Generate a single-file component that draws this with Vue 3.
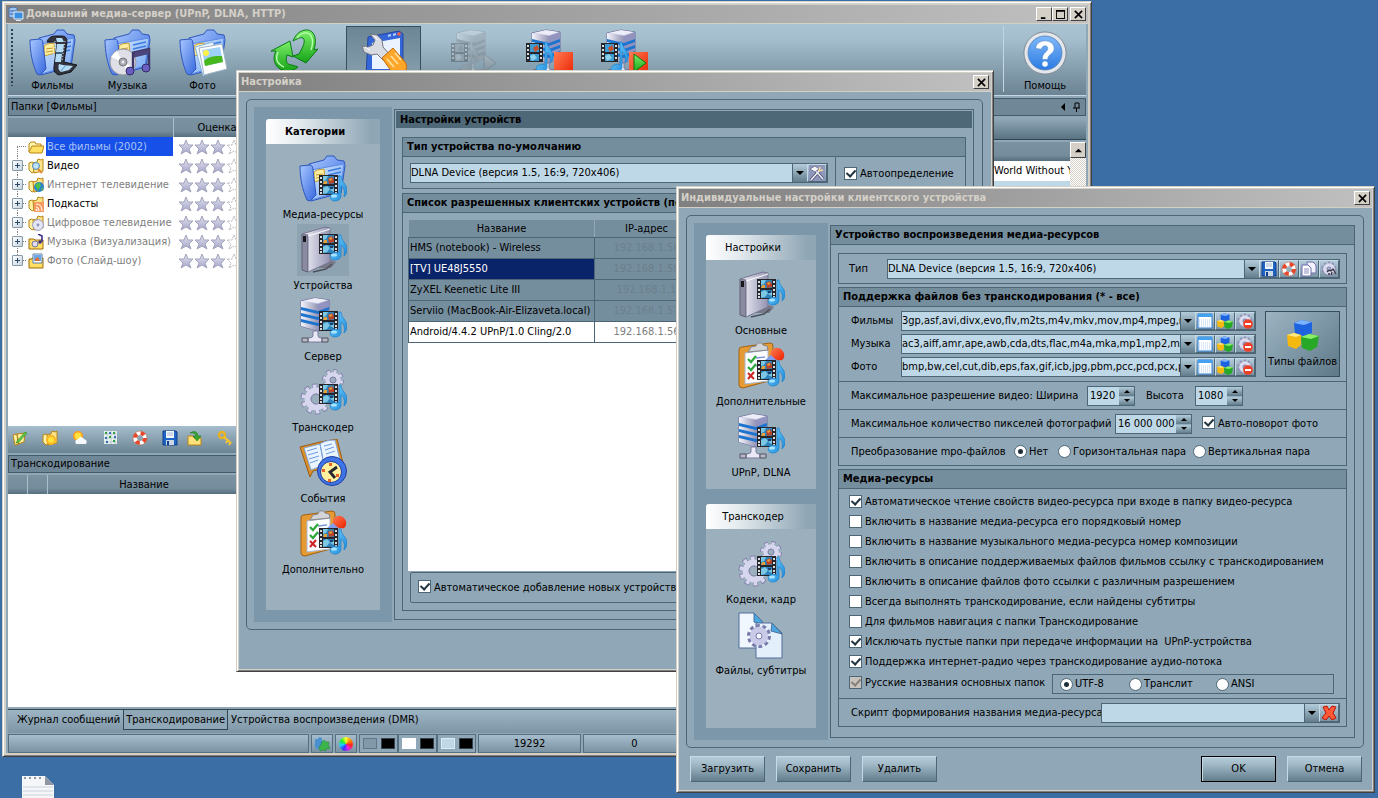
<script setup>
import { ref } from 'vue';

const toolbarMain = [
	{ title: 'Фильмы', icons: ['folder', 'filmroll'] },
	{ title: 'Музыка', icons: ['folder', 'disc'] },
	{ title: 'Фото', icons: ['folder', 'photos'] },
];

const toolbarServer = [
	{ id: 'start', title: 'Запуск', icons: ['server-right', 'media-left', 'play'] },
	{ id: 'stop', title: 'Стоп', icons: ['server-right', 'media-left', 'stop'] },
	{ id: 'restart', title: 'Перезапуск', icons: ['server-right', 'media-left', 'stop', 'play'] },
];

const folders = [
	{ title: 'Все фильмы (2002)', icon: 'f-open', selected: true },
	{ title: 'Видео', icon: 'f-video', child: true },
	{ title: 'Интернет телевидение', icon: 'f-globe', child: true, dim: true },
	{ title: 'Подкасты', icon: 'f-rss', child: true },
	{ title: 'Цифровое телевидение', icon: 'f-disc', child: true, dim: true },
	{ title: 'Музыка (Визуализация)', icon: 'f-music', child: true, dim: true },
	{ title: 'Фото (Слайд-шоу)', icon: 'f-photo', child: true, dim: true },
];

const smallTools = ['s-edit', 's-sunfolder', 's-weather', 's-grid', 's-buoy', 's-floppy'];
const smallTools2 = ['s-import', 's-key'];

const categories = [
	{ title: 'Медиа-ресурсы', icons: ['folder', 'media'] },
	{ title: 'Устройства', icons: ['drive', 'media'] },
	{ title: 'Сервер', icons: ['server', 'media'] },
	{ title: 'Транскодер', icons: ['gears', 'media'] },
	{ title: 'События', icons: ['book'] },
	{ title: 'Дополнительно', icons: ['clipboard', 'media'] },
];
const activeCategory = ref(1);

const devices = [
	{ name: 'HMS (notebook) - Wireless', ip: '192.168.1.58' },
	{ name: '[TV] UE48J5550', ip: '192.168.1.59' },
	{ name: 'ZyXEL Keenetic Lite III', ip: '192.168.1.1' },
	{ name: 'Serviio (MacBook-Air-Elizaveta.local)', ip: '192.168.1.57' },
	{ name: 'Android/4.4.2 UPnP/1.0 Cling/2.0', ip: '192.168.1.56', on: true },
];
const activeDevice = ref(1);

const deviceMenu = [
	{
		title: 'Настройки',
		items: [
			{ title: 'Основные', icons: ['drive', 'media'] },
			{ title: 'Дополнительные', icons: ['clipboard', 'media'] },
			{ title: 'UPnP, DLNA', icons: ['server', 'media'] },
		],
	},
	{
		title: 'Транскодер',
		items: [
			{ title: 'Кодеки, кадр', icons: ['gears', 'media'] },
			{ title: 'Файлы, субтитры', icons: ['files'] },
		],
	},
];

// how far down the media badge sits on each base icon
const badgeTop = { folder: 20, drive: 8, server: 14, gears: 16, clipboard: 18 };

function layerTop(name, icons) {
	return name === 'media' ? badgeTop[icons[0]] : 0;
}

const formats = ref([
	{ id: 'films', title: 'Фильмы', value: '3gp,asf,avi,divx,evo,flv,m2ts,m4v,mkv,mov,mp4,mpeg,mpg,mts' },
	{ id: 'music', title: 'Музыка', value: 'ac3,aiff,amr,ape,awb,cda,dts,flac,m4a,mka,mp1,mp2,mp3,mpa' },
	{ id: 'photo', title: 'Фото', value: 'bmp,bw,cel,cut,dib,eps,fax,gif,icb,jpg,pbm,pcc,pcd,pcx,pdd' },
]);

const options = ref([
	{ title: 'Автоматическое чтение свойств видео-ресурса при входе в папку видео-ресурса', on: true },
	{ title: 'Включить в название медиа-ресурса его порядковый номер', on: false },
	{ title: 'Включить в название музыкального медиа-ресурса номер композиции', on: false },
	{ title: 'Включить в описание поддерживаемых файлов фильмов ссылку с транскодированием', on: false },
	{ title: 'Включить в описание файлов фото ссылки с различным разрешением', on: false },
	{ title: 'Всегда выполнять транскодирование, если найдены субтитры', on: false },
	{ title: 'Для фильмов навигация с папки Транскодирование', on: false },
	{ title: 'Исключать пустые папки при передаче информации на  UPnP-устройства', on: true },
	{ title: 'Поддержка интернет-радио через транскодирование аудио-потока', on: true },
]);

const width = ref('1920');
const height = ref('1080');
const pixels = ref('16 000 000');
const autoDetect = ref(true);
const autoAdd = ref(true);
const autoRotate = ref(true);
const mpo = ref('none');
const encoding = ref('utf');
</script>

<template>
	<div class="desktop">
		<svg class="defs" width="0" height="0" aria-hidden="true">
			<defs>
				<linearGradient id="g-blue" x1="0" y1="0" x2="1" y2="1">
					<stop offset="0" stop-color="#a9c8ff" /><stop offset="1" stop-color="#3567dd" />
				</linearGradient>
				<linearGradient id="g-pale" x1="0" y1="0" x2="1" y2="1">
					<stop offset="0" stop-color="#d6eaff" /><stop offset="1" stop-color="#6fa2f2" />
				</linearGradient>
				<linearGradient id="g-metal" x1="0" y1="0" x2="1" y2="0">
					<stop offset="0" stop-color="#f4f4fb" /><stop offset="1" stop-color="#9494b4" />
				</linearGradient>
				<linearGradient id="g-note" x1="0" y1="0" x2="1" y2="1">
					<stop offset="0" stop-color="#7fd8ff" /><stop offset="1" stop-color="#1583d8" />
				</linearGradient>
				<linearGradient id="g-green" x1="0" y1="0" x2="0" y2="1">
					<stop offset="0" stop-color="#7cf06a" /><stop offset="1" stop-color="#17a317" />
				</linearGradient>
				<linearGradient id="g-gold" x1="0" y1="0" x2="1" y2="1">
					<stop offset="0" stop-color="#fff2a0" /><stop offset="1" stop-color="#e8a91c" />
				</linearGradient>
				<linearGradient id="g-red" x1="0" y1="0" x2="1" y2="1">
					<stop offset="0" stop-color="#ff7b52" /><stop offset="1" stop-color="#ea2100" />
				</linearGradient>
				<linearGradient id="g-star" x1="0" y1="0" x2="0" y2="1">
					<stop offset="0" stop-color="#e4e4f0" /><stop offset="1" stop-color="#a4a4cc" />
				</linearGradient>
				<linearGradient id="g-help" x1="0" y1="0" x2="0" y2="1">
					<stop offset="0" stop-color="#7fb9fa" /><stop offset="1" stop-color="#2b7ae2" />
				</linearGradient>
			</defs>

			<symbol id="folder" viewBox="0 0 48 48">
				<path d="M10 9l15-4 3-4h7l3 4 7 1 1 5-4 27-30 8z" fill="url(#g-blue)" stroke="#2f57bd" />
				<path d="M12 15l33-6-4 28-29 8z" fill="url(#g-pale)" stroke="#5d8be6" />
				<path d="M15 17l3-2 7-1 1 10-11 3z" fill="#fdeea0" stroke="#c79c31" />
				<path d="M17 20l7-1M17 23l7-1" stroke="#c79c31" />
				<path d="M29 16l13-3M29 20l13-3M29 24l12-3" stroke="#3d7be0" stroke-width="1.5" />
				<path d="M1 11l10-1c2 0 3 2 3 5l3 25-6 6-3-1C3 34 1 22 1 11z" fill="url(#g-blue)" stroke="#2f57bd" />
			</symbol>
			<symbol id="media" viewBox="0 0 48 48">
				<path d="M20 0h19v20H20z" fill="#26262a" />
				<path d="M21 2h2v2h-2zM21 6h2v2h-2zM21 10h2v2h-2zM21 14h2v2h-2zM36 2h2v2h-2zM36 6h2v2h-2zM36 10h2v2h-2zM36 14h2v2h-2zM21 17h2v2h-2zM36 17h2v2h-2z" fill="#d5dde2" />
				<path d="M24 1h11v8H24zM24 11h11v8H24z" fill="#2f83bd" />
				<path d="M24 1h5l-2 4-3 1zM24 13l4-2 3 3-3 4-4 1zM31 15l4-2v4z" fill="#7cc8e4" />
				<path d="M29 4l4-2 2 3v3l-5 1z" fill="#b8452a" />
				<path d="M30 4l3-1v2l-2 1zM25 6h3v3h-4z" fill="#e2a13c" />
				<path d="M31 12h3v2h-3z" fill="#203e6e" />
				<path d="M40 1h2c0 6 6 8 6 14 0 3-1 5-3 7 1-6 0-9-3-11v10c0 3-3 5-6 5-6 0-6-6-2-7 2-1 4-1 6 0z" fill="url(#g-note)" stroke="#1583d0" stroke-width=".7" />
				<ellipse cx="35" cy="21" rx="3" ry="1.6" fill="#a9e4ff" />
			</symbol>
			<symbol id="media-left" viewBox="0 0 48 48">
				<path d="M1 14h17v19H1z" fill="#26262a" />
				<path d="M2 16h2v2H2zM2 20h2v2H2zM2 24h2v2H2zM2 28h2v2H2zM15 16h2v2h-2zM15 20h2v2h-2zM15 24h2v2h-2zM15 28h2v2h-2z" fill="#d5dde2" />
				<path d="M5 15h9v8H5zM5 25h9v7H5z" fill="#3d9bd2" />
				<path d="M8 19l4-3 2 4-4 3z" fill="#c9502c" />
				<path d="M5 27l4-2 3 4-5 3z" fill="#8fd2ea" />
				<path d="M20 13h2c0 6 6 8 6 14 0 3-1 5-3 7 1-6 0-9-3-11v15c0 3-3 5-6 5-6 0-6-6-2-7 2-1 4-1 6 0z" fill="url(#g-note)" stroke="#1583d0" stroke-width=".7" />
			</symbol>
			<symbol id="filmroll" viewBox="0 0 48 48">
				<path d="M18 13q2-6 8-6h7q5 0 5 6l-3 20 13 3-6 7-12 3q-6-2-5-8l3-23q-2-3-5-2z" fill="#34343e" stroke="#17171d" />
				<path d="M27 9h6l2 4h-7zM28 15h7l-1 8h-7zM27 25h6l-1 8h-6zM30 35l4 1 10 1-4 4-8 2q-4-3-2-8z" fill="#b5dcf5" />
				<path d="M27 24l7 0M37 36l-5 6" stroke="#5b93bd" />
				<path d="M26 12l-3 25M36 12l-3 20" stroke="#e0e3e8" stroke-dasharray="1 2" fill="none" />
			</symbol>
			<symbol id="disc" viewBox="0 0 48 48">
				<circle cx="19" cy="33" r="13" fill="#dfe0e7" stroke="#9799a4" />
				<path d="M19 33l-12-5a13 13 0 0 1 6-6zM19 33l12 6a13 13 0 0 1-7 6z" fill="#fff" />
				<circle cx="19" cy="33" r="4" fill="#a7a9b5" stroke="#777" />
				<circle cx="19" cy="33" r="1.5" fill="#eee" />
				<path d="M28 24l17-4v19" fill="none" stroke="#3c3768" stroke-width="2.4" />
				<path d="M28 24l17-4v5l-17 4z" fill="#4b457c" />
				<path d="M29 24v17" stroke="#3c3768" stroke-width="2.4" />
				<circle cx="26" cy="42" r="4" fill="#6a5fc0" stroke="#322d66" />
				<circle cx="42" cy="39" r="4" fill="#6a5fc0" stroke="#322d66" />
			</symbol>
			<symbol id="photos" viewBox="0 0 48 48">
				<path d="M16 18l18-5 8 25-18 9z" fill="#eef6fd" stroke="#84b2d8" />
				<path d="M20 19l23-4 5 25-23 6z" fill="#fff" stroke="#9fb4c4" />
				<path d="M23 21l18-3 3 15-18 4z" fill="#9fd2f8" />
				<path d="M25 32c5-5 10-5 18-5l1 6-18 4z" fill="#46b81e" />
				<circle cx="27" cy="24" r="3" fill="#fff04d" />
			</symbol>
			<symbol id="sync" viewBox="0 0 48 48">
				<path d="M20 12l3 16-6-2c-2 6 0 10 5 10l6 2c-6 6-18 5-22-2-3-5-2-10 0-14H1z" fill="url(#g-green)" stroke="#0b7a15" />
				<path d="M23 12C27 1 38-2 43 4c3 4 3 10 1 17l4-1-12 14-13-7 6-2c4-7 7-13 4-16-3-1-6 1-10 3z" fill="url(#g-green)" stroke="#0b7a15" />
				<path d="M27 9c5-7 12-6 14-2 2 3 2 8 0 14M8 23c-3 7-1 12 6 15" fill="none" stroke="#b8ffae" stroke-width="1.4" />
			</symbol>
			<symbol id="tools" viewBox="0 0 48 48">
				<path d="M8 7l31-6 4 3v34l-4 9H6z" fill="#3566d8" stroke="#2346a0" />
				<path d="M12 13l28-5v31H12z" fill="#eaf3ff" />
				<path d="M28 5l3-1v2l-3 1zM33 4l3-1v2l-3 1z" fill="#bcd2ff" />
				<circle cx="39" cy="4" r="1.8" fill="#ff5b3c" />
				<path d="M2 16l2 6 7 3 6-1 9 9 6-6-9-10-1-7-5-5-7-1 5 6-2 5-5 2z" fill="#d9dbe3" stroke="#73757f" />
				<path d="M5 17l5 3M14 6l4 4" stroke="#fff" />
				<path d="M22 28l11-10 12 14c5 7-3 17-11 13z" fill="#ffa629" stroke="#c56b06" />
				<path d="M27 29l7 8M31 26l7 8M35 23l6 7" stroke="#ffdf9a" stroke-width="1.8" />
			</symbol>
			<symbol id="server" viewBox="0 0 48 48">
				<path d="M2 4l14-3 14 2v26l-11 5-17-5z" fill="#c5c6e4" stroke="#6a6a98" />
				<path d="M2 4l17 3v27L2 29z" fill="url(#g-metal)" />
				<path d="M19 7l11-4v26l-11 5z" fill="#9393bf" />
				<path d="M3 4l13-3 13 2-10 3z" fill="#eeeef8" />
				<path d="M2 10l17 4 11-4v3l-11 4-17-4zM2 16l17 4 11-4v3l-11 4-17-4zM2 22l17 4 11-4v3l-11 4-17-4z" fill="#1d74cf" />
				<path d="M14 34h5v5q0 2 4 2v4H9v-4q5 0 5-2z" fill="#e9e9f5" stroke="#7a7a9b" />
				<path d="M3 41h6v4H3zM23 41h6v4h-6z" fill="#b8b9c8" stroke="#50515e" />
			</symbol>
			<symbol id="server-right" viewBox="0 0 48 48">
				<use href="#server" x="5" />
			</symbol>
			<symbol id="drive" viewBox="0 0 48 48">
				<path d="M18 42l14 0 5-6-5-2z" fill="#777987" />
				<path d="M3 8l6 1v37l-6-2z" fill="#8a8aa0" stroke="#5e5e74" />
				<path d="M3 8L26 1l5 1v34L9 46V9z" fill="url(#g-metal)" stroke="#77778f" />
				<path d="M9 10l22-7" stroke="#fff" />
				<path d="M4 10h3v6H4z" fill="#16161c" />
				<path d="M14 46l13-3 6-5" stroke="#4f505e" stroke-width="1.4" fill="none" />
			</symbol>
			<symbol id="gears" viewBox="0 0 48 48">
				<g fill="none" stroke="#7d7da8">
					<circle cx="17" cy="31" r="13" stroke-width="5" stroke-dasharray="5 3.17" />
					<circle cx="34" cy="12" r="9" stroke-width="4" stroke-dasharray="3.9 3.17" />
				</g>
				<g fill="none" stroke="#d6d6ee">
					<circle cx="17" cy="31" r="12.6" stroke-width="4" stroke-dasharray="3.8 4.1" stroke-dashoffset="-.5" />
					<circle cx="17" cy="31" r="8.4" stroke-width="6" />
					<circle cx="34" cy="12" r="8.6" stroke-width="3" stroke-dasharray="3 3.75" stroke-dashoffset="-.4" />
					<circle cx="34" cy="12" r="5.5" stroke-width="4.4" />
				</g>
				<circle cx="17" cy="31" r="5" fill="none" stroke="#8080aa" />
				<circle cx="34" cy="12" r="3" fill="none" stroke="#8080aa" />
			</symbol>
			<symbol id="book" viewBox="0 0 48 48">
				<path d="M1 8l20-5 17-3 6 24-30 8-3 6z" fill="#d98f2c" stroke="#9d5d10" />
				<path d="M5 9l16-4 4 21-13 5zM21 5c4-3 9-4 15-4l5 20c-6 0-11 2-16 5z" fill="#eaf4ff" stroke="#7da3d6" />
				<path d="M8 12l10-3M9 16l10-3M10 20l10-3M11 24l8-3M25 7l8-2M26 11l9-3M27 15l9-3" stroke="#6c9ae8" />
				<circle cx="33" cy="32" r="14.5" fill="#3f73e8" stroke="#1f3f9e" />
				<circle cx="32" cy="33" r="10.5" fill="#fff19e" stroke="#1f3f9e" />
				<path d="M30 24h3v3h-3zM23 30h3v3h-3zM37 35h3v3h-3zM29 40h3v3h-3z" fill="#e8622c" />
				<path d="M38 28l-7 5 5 6" fill="none" stroke="#26262e" stroke-width="2.8" />
			</symbol>
			<symbol id="clipboard" viewBox="0 0 48 48">
				<path d="M2 8q0-3 3-3l28-4q3 0 3 3l-1 34L6 46q-4 0-4-3z" fill="#e59a34" stroke="#a3620f" />
				<path d="M8 11l23-3v31L8 42z" fill="#fbfdff" stroke="#aab7d0" />
				<path d="M11 10l3-5 5-1c1-4 6-4 7-1l4 1 1 4z" fill="#d3d4d8" stroke="#85868c" />
				<path d="M19 16l9-1M19 24l6-1" stroke="#7b95d8" stroke-width="1.4" />
				<path d="M11 17l3 3 5-6M11 25l3 3 5-6" fill="none" stroke="#2da83b" stroke-width="2.2" />
				<path d="M11 31l6 6M17 30l-6 7" stroke="#cf2222" stroke-width="2" />
				<path d="M27 19l8-7 5 6-7 6z" fill="#7f9eeb" />
				<path d="M34 9l4-3q6-1 9 5 1 5-2 7-4 1-7-1l-4-4z" fill="url(#g-red)" />
			</symbol>
			<symbol id="files" viewBox="0 0 48 48">
				<path d="M2 2h15l8 8v27H2z" fill="#f1f7ff" stroke="#4f6f9b" />
				<path d="M17 2l8 8v3l-8-2z" fill="#4aa7e0" stroke="#4f6f9b" />
				<path d="M19 12h16l10 10v25H19z" fill="#e4effc" stroke="#4f6f9b" />
				<path d="M35 12l10 11-11-3z" fill="#4aa7e0" stroke="#4f6f9b" />
				<circle cx="22" cy="25" r="10" fill="none" stroke="#7b7bab" stroke-width="4" stroke-dasharray="3.6 2.68" />
				<circle cx="22" cy="25" r="6.2" fill="none" stroke="#c9c9e8" stroke-width="6" />
				<circle cx="22" cy="25" r="3" fill="#f1f7ff" stroke="#7b7bab" />
			</symbol>
			<symbol id="stop" viewBox="0 0 48 48">
				<path d="M29 23h19v25H29z" fill="url(#g-red)" />
			</symbol>
			<symbol id="play" viewBox="0 0 48 48">
				<path d="M34 25l12 9-12 9z" fill="url(#g-green)" stroke="#0d7510" />
			</symbol>
			<symbol id="help" viewBox="0 0 48 48">
				<circle cx="24" cy="24" r="23" fill="#e3e6ea" stroke="#7d868f" />
				<circle cx="24" cy="24" r="18.5" fill="url(#g-help)" stroke="#5a86bd" />
				<path d="M14 19c0-11 20-11 20 0 0 6-7 6-7 12h-6c0-8 6-8 6-12 0-4-6-4-7 1z" fill="#fff" stroke="#4a7fc4" stroke-width=".6" /><circle cx="24" cy="36" r="3" fill="#fff" />
			</symbol>
			<symbol id="cubes" viewBox="0 0 32 32">
				<path d="M7 4l7-3 11 2v11l-8 3-9-2z" fill="#1d62de" />
				<path d="M7 4l7-3 11 2-8 3z" fill="#7db3ff" />
				<path d="M0 16l7-2 7 2v10l-5 4-8-3z" fill="#f5b80e" />
				<path d="M0 16l7-2 7 2-5 2z" fill="#ffe981" />
				<path d="M14 18l8-3 10 2-2 11-7 4-8-3z" fill="#27a827" />
				<path d="M14 18l8-3 10 2-8 3z" fill="#8aee6a" />
			</symbol>

			<!-- 16px icons -->
			<symbol id="f-open" viewBox="0 0 16 16">
				<path d="M1 13V5l2-2h4l1 2h5v2" fill="#fff6b0" stroke="#b98513" />
				<path d="M1 13l3-6h12l-2 7H2z" fill="#ffdf63" stroke="#b98513" />
			</symbol>
			<symbol id="f-base" viewBox="0 0 16 16">
				<path d="M1 5l3-1 2 1v9l-2 1-3-3z" fill="#fff0a2" stroke="#b98513" />
				<path d="M5 5l4-1 1-3 3 1 2-1v12l-9 2z" fill="#fbe48a" stroke="#b98513" />
			</symbol>
			<symbol id="f-video" viewBox="0 0 16 16">
				<use href="#f-base" /><circle cx="8" cy="8" r="3.4" fill="#bfe4fb" stroke="#4886b8" />
				<path d="M10 11l4 4" stroke="#e08a2e" stroke-width="2.2" />
			</symbol>
			<symbol id="f-globe" viewBox="0 0 16 16">
				<use href="#f-base" /><circle cx="11" cy="10" r="5" fill="#2b7fd1" /><path d="M7 8l4-3 2 3-3 6zM14 9l1 3-2 2z" fill="#4bc04a" />
			</symbol>
			<symbol id="f-rss" viewBox="0 0 16 16">
				<use href="#f-base" /><path d="M6 6h10v10H6z" fill="#f79a60" />
				<path d="M8 11q3 0 3 4M8 8q6 0 6 7" stroke="#fff" fill="none" /><circle cx="8.5" cy="14" r="1" fill="#fff" />
			</symbol>
			<symbol id="f-disc" viewBox="0 0 16 16">
				<use href="#f-base" /><circle cx="10" cy="10" r="5.4" fill="#e4e6f5" stroke="#9a9cc0" /><circle cx="10" cy="10" r="1.4" fill="#8f91b8" />
			</symbol>
			<symbol id="f-music" viewBox="0 0 16 16">
				<path d="M1 5h5l1 1h8v9H1z" fill="#ffdf63" stroke="#9d6a08" /><circle cx="7" cy="10" r="3" fill="#dcdcee" stroke="#77779b" />
				<path d="M10 0l4 2v6" stroke="#3a2f86" stroke-width="1.6" fill="none" /><circle cx="12" cy="8" r="1.8" fill="#3a2f86" />
			</symbol>
			<symbol id="f-photo" viewBox="0 0 16 16">
				<path d="M1 6h3v-1h11v10H1z" fill="#ffdf63" stroke="#9d6a08" /><path d="M5 1h9v9H5z" fill="#fff" stroke="#5b7ca5" /><path d="M6 2h7v6H6z" fill="#67a9e8" /><path d="M7 6l3-2 2 4H7z" fill="#e06b35" />
			</symbol>
			<symbol id="star" viewBox="0 0 16 16">
				<path d="M8 1l2 5h5l-4 4 2 5-5-3-5 3 2-5-4-4h5z" fill="url(#g-star)" stroke="#a3a3bb" />
			</symbol>
			<symbol id="star-off" viewBox="0 0 16 16">
				<path d="M8 1l2 5h5l-4 4 2 5-5-3-5 3 2-5-4-4h5z" fill="#fff" stroke="#b4b4bb" stroke-dasharray="2 1" />
			</symbol>
			<symbol id="s-edit" viewBox="0 0 16 16">
				<path d="M1 5l4-1 2 10-4 1zM5 4l8-1-1 9-6 2z" fill="#fff0a2" stroke="#b98513" /><path d="M5 11l8-9 2 1-8 9-3 1z" fill="#62c849" stroke="#2c8f1d" stroke-width=".6" />
			</symbol>
			<symbol id="s-sunfolder" viewBox="0 0 16 16">
				<use href="#f-base" /><circle cx="9" cy="10" r="5" fill="#ffb51e" /><circle cx="9" cy="10" r="3" fill="#ffe23d" />
			</symbol>
			<symbol id="s-weather" viewBox="0 0 16 16">
				<circle cx="6" cy="6" r="5" fill="#ff9b1e" /><circle cx="6" cy="6" r="3.4" fill="#ffe23d" /><path d="M4 14q-2-4 2-5 3-4 6 0 4 1 2 5z" fill="#f6fafd" />
			</symbol>
			<symbol id="s-grid" viewBox="0 0 16 16">
				<path d="M2 1h13v13H2z" fill="#e9f2f0" /><path d="M2 4h13M2 8h13M2 12h13M5 1v13M9 1v13M13 1v13" stroke="#9db5b5" stroke-width=".6" />
				<path d="M3 2h2v2H3zM7 6h2v2H7zM11 10h2v2h-2zM11 2h2v2h-2z" fill="#2fa04a" /><path d="M7 2h2v2H7zM3 7h2v2H3zM4 11h2v2H4zM12 6h2v2h-2z" fill="#3b6fc0" />
			</symbol>
			<symbol id="s-buoy" viewBox="0 0 16 16">
				<circle cx="8" cy="8" r="5" fill="none" stroke="#fff" stroke-width="4.2" /><circle cx="8" cy="8" r="5" fill="none" stroke="#e5482a" stroke-width="4.2" stroke-dasharray="4 3.85" /><circle cx="8" cy="8" r="7" fill="none" stroke="#b8583f" stroke-width=".5" />
			</symbol>
			<symbol id="s-floppy" viewBox="0 0 16 16">
				<path d="M1 1h13l1 1v13H1z" fill="#1d64c4" stroke="#123f8c" /><path d="M4 1h8v7H4z" fill="#f2f7fc" /><path d="M5 3h6M5 5h6" stroke="#a9b9cc" /><path d="M4 10h8v5H4z" fill="#cdd7e2" /><path d="M5 11h2v4H5z" fill="#123f8c" />
			</symbol>
			<symbol id="s-import" viewBox="0 0 16 16">
				<path d="M1 15V6h5l1 2h7v7z" fill="#ffe27a" stroke="#b98513" /><path d="M3 3q7-4 8 3h3l-4 5-4-5h3q-1-4-6-3z" fill="#37a732" stroke="#1c7a1a" stroke-width=".6" />
			</symbol>
			<symbol id="s-key" viewBox="0 0 16 16">
				<circle cx="5" cy="5" r="3" fill="none" stroke="#e9b320" stroke-width="2.4" /><path d="M7 7l7 6M11 10l-2 3M14 12l-2 3" stroke="#f2c233" stroke-width="2.2" />
			</symbol>
			<symbol id="s-copy" viewBox="0 0 16 16">
				<path d="M6 1h6l3 3v8H6z" fill="#f2f2ff" stroke="#6c6cac" /><path d="M1 4h6l3 3v8H1z" fill="#fff" stroke="#6c6cac" /><path d="M3 8h5M3 10h5M3 12h5" stroke="#8c8cc6" />
			</symbol>
			<symbol id="s-gear" viewBox="0 0 16 16">
				<circle cx="8" cy="8" r="6" fill="none" stroke="#8f8fb6" stroke-width="3" stroke-dasharray="2.2 1.57" /><circle cx="8" cy="8" r="4" fill="none" stroke="#dcdcf0" stroke-width="3.6" /><circle cx="8" cy="8" r="2" fill="#b6b6d6" stroke="#7d7da8" />
			</symbol>
			<symbol id="s-gearcheck" viewBox="0 0 16 16">
				<use href="#s-gear" /><path d="M6 11l2-2 2 1 2-2 3 5M7 13h2M11 11l-1 3" fill="none" stroke="#3a3a44" stroke-width="1.3" />
			</symbol>
			<symbol id="s-geardel" viewBox="0 0 16 16">
				<use href="#s-gear" /><circle cx="11" cy="11" r="4.8" fill="#ec4026" /><path d="M8 10h6v2H8z" fill="#fff" />
			</symbol>
			<symbol id="s-table" viewBox="0 0 16 16">
				<path d="M1 1h14v14H1z" fill="#fff" stroke="#2f7fd6" /><path d="M1 1h14v3H1z" fill="#43a1f0" /><path d="M2 7h12M2 9h12M2 11h12M2 13h12" stroke="#b3d0ee" stroke-dasharray="1 1" />
			</symbol>
			<symbol id="s-tools" viewBox="0 0 16 16">
				<path d="M0 0h16v16H0z" fill="#8f97bd" /><path d="M2 15L11 5M5 4l9 10" stroke="#4a4f6e" stroke-width="3" /><path d="M2 15L11 5M5 4l9 10" stroke="#eef0f8" stroke-width="1.6" /><path d="M1 4l5-3 4 3-4 3z" fill="#f3f5fa" stroke="#4d5170" stroke-width=".6" /><path d="M10 6l1-4M14 5l-4 1" stroke="#f0d9a0" stroke-width="1.6" />
			</symbol>
			<symbol id="s-cross" viewBox="0 0 16 16">
				<path d="M2 2l4-1 2 4 3-4 4 1-3 6 3 5-4 2-3-4-3 4-4-2 4-5z" fill="#ff5a35" stroke="#b81608" />
			</symbol>
			<symbol id="s-puzzle" viewBox="0 0 16 16">
				<path d="M1 3h3l1-2 3 1v3l2 2-2 5-6 1-1-3z" fill="#4a8fd0" /><path d="M8 6l2-2 2 2 3 0-1 4 2 1-1 2-3-1v3l-3-1-3 1-1-4 2-2z" fill="#3cb54a" stroke="#19822a" stroke-width=".5" />
			</symbol>
			<symbol id="s-app" viewBox="0 0 16 16">
				<path d="M1 2l5-1 3 1v9l-5 1-3-1z" fill="#9fc1ea" stroke="#4c73a8" /><path d="M2 5h6M2 8h6" stroke="#2f62b1" /><path d="M6 6h9v7H6z" fill="#3b8fe0" stroke="#e6f0fb" /><path d="M8 14h5v1H8z" fill="#dbe6f2" />
			</symbol>
			<symbol id="s-doc" viewBox="0 0 32 32">
				<path d="M0 1h23l9 9v22H0z" fill="#f4f6f8" /><path d="M23 1v9h9z" fill="#8d98a2" />
				<path d="M2 3h20" stroke="#8d98a2" stroke-width="2" stroke-dasharray="2 3" />
				<path d="M1 12h30M1 16h30M1 20h30M1 24h30M1 28h30" stroke="#c9d3dc" />
			</symbol>
		</svg>

		<!-- main window -->
		<section class="win win-main">
			<header class="caption">
				<svg class="ico16"><use href="#s-app" /></svg>
				<h1>Домашний медиа-сервер (UPnP, DLNA, HTTP)</h1>
				<button class="cap-btn" aria-label="Свернуть"><svg viewBox="0 0 10 10"><path d="M1 8h5v2H1z" /></svg></button>
				<button class="cap-btn" aria-label="Развернуть"><svg viewBox="0 0 10 10"><path d="M0 0h10v10H0zM1 2v7h8V2z" fill-rule="evenodd" /></svg></button>
				<button class="cap-btn cap-close" aria-label="Закрыть"><svg viewBox="0 0 10 10"><path d="M1 1l8 8M9 1l-8 8" stroke="#000" stroke-width="1.8" /></svg></button>
			</header>

			<div class="main-body">
				<nav class="toolbar">
					<span class="grip"></span>
					<button v-for="t in toolbarMain" :key="t.title" class="tool">
						<svg class="ico48"><use v-for="i in t.icons" :key="i" :href="'#' + i" /></svg>
						{{ t.title }}
					</button>
					<span class="tool-gap"></span>
					<button class="tool" aria-label="Обновить"><svg class="ico48"><use href="#sync" /></svg></button>
					<span class="tool-gap"></span>
					<button class="tool pressed" aria-label="Настройка"><svg class="ico48"><use href="#tools" /></svg></button>
					<span class="tool-gap"></span>
					<button v-for="t in toolbarServer" :key="t.id" class="tool" :class="{ off: t.id === 'start' }" :aria-label="t.title">
						<svg class="ico48"><use v-for="i in t.icons" :key="i" :href="'#' + i" /></svg>
					</button>
					<button class="tool tool-help"><svg class="ico48"><use href="#help" /></svg>Помощь</button>
				</nav>

				<div class="panels">
					<div class="panel-title"><span>Папки [Фильмы]</span>
						<svg class="pin" viewBox="0 0 20 10"><path d="M4 1v8L0 5z" fill="#000" /><path d="M14 6V1h4v5M12 6h7M15.500 6v4" fill="none" stroke="#000" /></svg>
					</div>
					<div class="split">
						<div class="tree-panel">
							<div class="col-head"><span class="c-name"></span><span class="c-rate">Оценка</span></div>
							<ul class="tree">
								<li v-for="f in folders" :key="f.title" :class="{ child: f.child }">
									<span class="node"><i v-if="f.child" class="plus"></i></span>
									<svg class="ico16"><use :href="'#' + f.icon" /></svg>
									<span class="name" :class="{ selected: f.selected, dim: f.dim }">{{ f.title }}</span>
									<span class="stars">
										<svg v-for="n in 5" :key="n" class="ico16"><use :href="n < 4 ? '#star' : '#star-off'" /></svg>
									</span>
								</li>
							</ul>
							<div class="mini-bar">
								<button v-for="s in smallTools" :key="s" :aria-label="s"><svg class="ico16"><use :href="'#' + s" /></svg></button>
								<span class="mini-group">
									<button v-for="s in smallTools2" :key="s" :aria-label="s"><svg class="ico16"><use :href="'#' + s" /></svg></button>
								</span>
							</div>
						</div>
						<div class="list-panel">
							<div class="list-bar"></div>
							<div class="list-area">
								<div class="list-rows">
									<div class="list-head"></div>
									<div class="list-row"><span>World Without You</span></div>
									<div class="list-row alt"></div>
								</div>
								<div class="scroll"><button class="cap-btn" aria-label="Вверх"><svg viewBox="0 0 10 10"><path d="M1 7l4-4 4 4z" /></svg></button></div>
							</div>
						</div>
					</div>
					<div class="panel-title"><span>Транскодирование</span></div>
					<div class="col-head job-head"><span></span><span></span><span>Название</span><span></span></div>
					<div class="jobs"></div>
					<div class="tabs">
						<button>Журнал сообщений</button>
						<button class="on">Транскодирование</button>
						<button>Устройства воспроизведения (DMR)</button>
					</div>
					<footer class="status">
						<span class="st st-text"></span>
						<span class="st"><svg class="ico16"><use href="#s-puzzle" /></svg></span>
						<span class="st"><i class="wheel"></i></span>
						<span class="st st-sw"><i class="sw grey"></i><i class="sw"></i></span>
						<span class="st st-sw"><i class="sw white"></i><i class="sw"></i></span>
						<span class="st st-sw"><i class="sw pale"></i><i class="sw"></i></span>
						<span class="st st-num">19292</span>
						<span class="st st-num">0</span>
						<span class="st st-fill"></span>
					</footer>
				</div>
			</div>
		</section>

		<!-- settings -->
		<section class="win win-settings">
			<header class="caption">
				<h2>Настройка</h2>
				<button class="cap-btn cap-close" aria-label="Закрыть"><svg viewBox="0 0 10 10"><path d="M1 1l8 8M9 1l-8 8" stroke="#000" stroke-width="1.8" /></svg></button>
			</header>
			<div class="frame">
				<aside class="side side-wide">
					<div class="side-group">
						<h3 class="bold">Категории</h3>
						<button v-for="(c, i) in categories" :key="c.title" class="side-item" :class="{ active: i === activeCategory }" @click="activeCategory = i">
							<span class="pic"><svg class="ico48"><use v-for="n in c.icons" :key="n" :href="'#' + n" :y="layerTop(n, c.icons)" /></svg></span>
							{{ c.title }}
						</button>
					</div>
				</aside>
				<div class="pane">
					<h3 class="pane-dark">Настройки устройств</h3>
					<div class="groups">
						<div class="group">
							<h4>Тип устройства по-умолчанию</h4>
							<div class="row-default">
								<div class="combo">
									<select aria-label="Тип устройства по-умолчанию"><option>DLNA Device (версия 1.5, 16:9, 720x406)</option></select>
									<i class="arrow"></i>
									<button aria-label="Настроить"><svg class="ico16"><use href="#s-tools" /></svg></button>
								</div>
								<label class="check auto"><input v-model="autoDetect" type="checkbox" />Автоопределение</label>
							</div>
						</div>
						<div class="group">
							<h4>Список разрешенных клиентских устройств (по IP)</h4>
							<div class="device-list">
								<table>
									<thead><tr><th>Название</th><th>IP-адрес</th><th></th></tr></thead>
									<tbody>
										<tr v-for="(d, i) in devices" :key="d.name" :class="{ on: d.on, current: i === activeDevice }" @click="activeDevice = i">
											<td>{{ d.name }}</td><td>{{ d.ip }}</td><td></td>
										</tr>
									</tbody>
								</table>
							</div>
							<div class="auto-add"><label class="check"><input v-model="autoAdd" type="checkbox" />Автоматическое добавление новых устройств</label></div>
						</div>
					</div>
				</div>
			</div>
		</section>

		<!-- device settings -->
		<section class="win win-device">
			<header class="caption">
				<h2>Индивидуальные настройки клиентского устройства</h2>
				<button class="cap-btn cap-close" aria-label="Закрыть"><svg viewBox="0 0 10 10"><path d="M1 1l8 8M9 1l-8 8" stroke="#000" stroke-width="1.8" /></svg></button>
			</header>
			<div class="frame">
				<aside class="side">
					<div v-for="g in deviceMenu" :key="g.title" class="side-group">
						<h3>{{ g.title }}</h3>
						<button v-for="c in g.items" :key="c.title" class="side-item">
							<span class="pic"><svg class="ico48"><use v-for="n in c.icons" :key="n" :href="'#' + n" :y="layerTop(n, c.icons)" /></svg></span>
							{{ c.title }}
						</button>
					</div>
				</aside>
				<div class="pane">
					<h4>Устройство воспроизведения медиа-ресурсов</h4>
					<div class="groups tight">
						<div class="group type-row">
							<label for="dev-type">Тип</label>
							<div class="combo">
								<select id="dev-type"><option>DLNA Device (версия 1.5, 16:9, 720x406)</option></select>
								<i class="arrow"></i>
								<button aria-label="Сохранить тип"><svg class="ico16"><use href="#s-floppy" /></svg></button>
								<button aria-label="Восстановить"><svg class="ico16"><use href="#s-buoy" /></svg></button>
								<button aria-label="Копировать"><svg class="ico16"><use href="#s-copy" /></svg></button>
								<button aria-label="Параметры"><svg class="ico16"><use href="#s-gearcheck" /></svg></button>
							</div>
						</div>

						<div class="group">
							<h4>Поддержка файлов без транскодирования (* - все)</h4>
							<div class="formats">
								<div class="format-rows">
									<template v-for="f in formats" :key="f.id">
										<label :for="f.id">{{ f.title }}</label>
										<div class="combo">
											<input :id="f.id" v-model="f.value" type="text" />
											<i class="arrow"></i>
											<button aria-label="Таблица"><svg class="ico16"><use href="#s-table" /></svg></button>
											<button aria-label="Типы"><svg class="ico16"><use href="#cubes" /></svg></button>
											<button aria-label="Очистить"><svg class="ico16"><use href="#s-geardel" /></svg></button>
										</div>
									</template>
								</div>
								<button class="types"><svg class="ico32"><use href="#cubes" /></svg>Типы файлов</button>
							</div>
							<div class="line">
								<span class="w-res">Максимальное разрешение видео:</span>
								<label class="w-lab" for="vw">Ширина</label>
								<span class="spin"><input id="vw" v-model="width" type="text" /><b></b></span>
								<label class="w-lab second" for="vh">Высота</label>
								<span class="spin"><input id="vh" v-model="height" type="text" /><b></b></span>
							</div>
							<div class="line">
								<label class="w-pix" for="px">Максимальное количество пикселей фотографий</label>
								<span class="spin long"><input id="px" v-model="pixels" type="text" /><b></b></span>
								<label class="check rotate"><input v-model="autoRotate" type="checkbox" />Авто-поворот фото</label>
							</div>
							<div class="line">
								<span class="w-mpo">Преобразование mpo-файлов</span>
								<label class="radio w-no"><input v-model="mpo" type="radio" value="none" name="mpo" />Нет</label>
								<label class="radio w-hor"><input v-model="mpo" type="radio" value="h" name="mpo" />Горизонтальная пара</label>
								<label class="radio"><input v-model="mpo" type="radio" value="v" name="mpo" />Вертикальная пара</label>
							</div>
						</div>

						<div class="group">
							<h4>Медиа-ресурсы</h4>
							<div class="options">
								<label v-for="o in options" :key="o.title" class="check"><input v-model="o.on" type="checkbox" />{{ o.title }}</label>
								<div class="names">
									<label class="check"><input type="checkbox" checked disabled />Русские названия основных папок</label>
									<div class="encodings">
										<label class="radio"><input v-model="encoding" type="radio" value="utf" name="enc" />UTF-8</label>
										<label class="radio"><input v-model="encoding" type="radio" value="translit" name="enc" />Транслит</label>
										<label class="radio"><input v-model="encoding" type="radio" value="ansi" name="enc" />ANSI</label>
									</div>
								</div>
							</div>
							<div class="line script">
								<label class="w-script" for="script">Скрипт формирования названия медиа-ресурса</label>
								<div class="combo">
									<select id="script"><option></option></select>
									<i class="arrow"></i>
									<button aria-label="Удалить скрипт"><svg class="ico16"><use href="#s-cross" /></svg></button>
								</div>
							</div>
						</div>
					</div>
				</div>
			</div>
			<div class="actions">
				<button>Загрузить</button>
				<button>Сохранить</button>
				<button>Удалить</button>
				<button class="ok">OK</button>
				<button>Отмена</button>
			</div>
		</section>

		<svg class="desk-icon"><use href="#s-doc" /></svg>
	</div>
</template>

<style>
body {
	margin: 0;
	background: #3a6ea5;
}
</style>

<style scoped>
.desktop {
	position: relative;
	height: 100vh;
	min-height: 798px;
	overflow: hidden;
	background: #3a6ea5;
	color: #000;
	font: 11px/14px "DejaVu Sans Condensed", "DejaVu Sans", sans-serif;
}
.desktop * {
	box-sizing: border-box;
}
.defs {
	position: absolute;
}
h1, h2, h3, h4, ul {
	margin: 0;
	padding: 0;
	font-size: 11px;
	line-height: 14px;
}
button, input, select {
	margin: 0;
	padding: 0;
	border: 0;
	background: none;
	color: inherit;
	font: inherit;
}
svg {
	display: block;
	flex: none;
}
.ico16 {
	width: 16px;
	height: 16px;
}
.ico32 {
	width: 32px;
	height: 32px;
}
.ico48 {
	width: 48px;
	height: 48px;
}
.desk-icon {
	position: absolute;
	left: 22px;
	top: 775px;
	width: 32px;
	height: 32px;
}

/* windows */
.win {
	position: absolute;
	display: flex;
	flex-direction: column;
	background: #8fa7b6;
	border: 1px solid;
	border-color: #d4d0c8 #404040 #404040 #d4d0c8;
	box-shadow: inset 1px 1px #fff, inset -1px -1px #808080, inset 2px 2px #d4d0c8, inset -2px -2px #d4d0c8;
	padding: 2px;
}
.win-main {
	left: 2px;
	right: 286px;
	top: 1px;
	bottom: 41px;
	padding: 3px;
	box-shadow: inset 1px 1px #fff, inset -1px -1px #808080, inset 3px 3px #d4d0c8, inset -3px -3px #d4d0c8;
}
.win-settings {
	left: 236px;
	right: 384px;
	top: 70px;
	padding-bottom: 41px;
}
.win-device {
	left: 676px;
	right: 3px;
	top: 186px;
}
.caption {
	display: flex;
	flex: none;
	align-items: center;
	height: 19px;
	padding: 0 2px;
	border-bottom: 1px solid #d4d0c8;
	background: linear-gradient(90deg, #808080, #c0c0c0);
	color: #d4d0c8;
}
.caption h1, .caption h2 {
	flex: 1;
	white-space: nowrap;
}
.win-main .caption h1 {
	padding-left: 2px;
}
.cap-btn {
	display: grid;
	place-items: center;
	width: 16px;
	height: 14px;
	background: #d4d0c8;
	border: 1px solid;
	border-color: #fff #404040 #404040 #fff;
}
.cap-btn svg {
	width: 9px;
	height: 9px;
}
.cap-close {
	margin-left: 2px;
}

/* main window */
.main-body {
	flex: 1;
	display: flex;
	flex-direction: column;
	min-height: 0;
	padding: 0 2px;
}
.toolbar {
	display: flex;
	align-items: stretch;
	flex: none;
	height: 72px;
	padding: 2px 0 3px 3px;
	background: linear-gradient(#a9c3d3, #a5bfcf 20%, #6b8393);
	border-bottom: 1px solid #c3d6e1;
	overflow: hidden;
}
.grip {
	width: 2px;
	margin: 3px 2px 6px 0;
	background: repeating-linear-gradient(#2b4150 0 2px, transparent 2px 4px);
}
.tool {
	display: flex;
	flex-direction: column;
	align-items: center;
	flex: none;
	width: 75px;
	padding-top: 3px;
	gap: 2px;
}
.tool-gap {
	flex: none;
	width: 16px;
}
.tool-gap ~ .tool-gap {
	width: 15px;
}
.pressed {
	background: linear-gradient(#6d8696, #8ca5b4);
	border: 1px solid #36505f;
}
.off svg {
	filter: grayscale(1);
	opacity: .3;
}
.tool-help {
	margin-left: auto;
	border-left: 1px solid #c3d6e1;
	width: 83px;
}
.tool-help .ico48 {
	height: 44px;
	margin: 2px 0;
}
.panels {
	flex: 1;
	display: flex;
	flex-direction: column;
	min-height: 0;
}
.panel-title {
	display: flex;
	align-items: center;
	justify-content: space-between;
	flex: none;
	height: 18px;
	margin-top: 2px;
	padding: 0 4px 0 2px;
	border: 1px solid #435b6a;
	background: #708797;
}
.pin {
	width: 20px;
	height: 10px;
}
.split {
	flex: none;
	display: flex;
	height: 335px;
	margin-top: 2px;
}
.tree-panel {
	display: flex;
	flex-direction: column;
	width: 460px;
}
.col-head {
	display: flex;
	flex: none;
	height: 19px;
	background: linear-gradient(#7b92a1, #748c9b 70%, #566f7e);
	line-height: 20px;
}
.c-name {
	width: 166px;
	border-right: 1px solid #a9c0ce;
}
.c-rate {
	width: 86px;
	text-align: center;
}
.tree {
	flex: 1;
	background: #fff;
	list-style: none;
}
.tree li {
	display: flex;
	align-items: center;
	height: 19px;
	padding-left: 4px;
}
.node {
	position: relative;
	align-self: stretch;
	width: 16px;
}
.node::before, .node::after {
	content: '';
	position: absolute;
	left: 5px;
	top: 0;
	bottom: 0;
	border-left: 1px dotted #808080;
}
.node::after {
	top: 9px;
	right: 2px;
	bottom: auto;
	border: 0;
	border-top: 1px dotted #808080;
}
.tree li:first-child .node::before {
	top: 9px;
}
.tree li:last-child .node::before {
	bottom: 9px;
}
.plus {
	position: absolute;
	z-index: 1;
	left: 0;
	top: 4px;
	width: 11px;
	height: 11px;
	border: 1px solid #8599a8;
	border-radius: 1px;
	background: linear-gradient(#2c4a66, #2c4a66) center / 5px 1px no-repeat, linear-gradient(#2c4a66, #2c4a66) center / 1px 5px no-repeat, linear-gradient(135deg, #fff, #c6d4e0);
}
.name {
	flex: none;
	width: 127px;
	margin: 0 5px 0 2px;
	padding-left: 1px;
	line-height: 19px;
	white-space: nowrap;
	overflow: hidden;
}
.name.dim {
	color: #808080;
}
.name.selected {
	background: #1650e8;
	color: #a9c4f5;
}
.stars {
	display: flex;
}
.mini-bar {
	display: flex;
	align-items: center;
	gap: 14px;
	height: 27px;
	padding: 0 4px 4px;
	background: linear-gradient(#a5bdcc, #6b8494);
}
.mini-group {
	display: flex;
	gap: 14px;
	margin-left: -5px;
}
.list-panel {
	flex: 1;
	display: flex;
	flex-direction: column;
}
.list-bar {
	height: 22px;
	background: linear-gradient(#90a8b7, #5a7382);
	border-bottom: 1px solid #2f4553;
}
.list-area {
	flex: 1;
	display: flex;
	margin-top: 2px;
}
.list-rows {
	flex: 1;
	background: #fff;
}
.list-head {
	height: 19px;
	background: linear-gradient(#7b92a1, #748c9b 70%, #566f7e);
}
.list-row {
	display: flex;
	justify-content: flex-end;
	height: 20px;
	line-height: 19px;
}
.list-row span {
	width: 76px;
	overflow: hidden;
	white-space: nowrap;
}
.list-row.alt {
	background: #bfd8e7;
}
.scroll {
	width: 16px;
	background: repeating-conic-gradient(#fff 0 25%, #d4d0c8 0 50%) 0 0 / 2px 2px;
}
.scroll .cap-btn {
	height: 16px;
}
.job-head {
	margin-top: 2px;
}
.job-head span {
	width: 20px;
	border-right: 1px solid #a9c0ce;
}
.job-head span:nth-child(3) {
	width: 192px;
	text-align: center;
	border: 0;
}
.jobs {
	flex: 1;
	background: #fff;
}
.tabs {
	display: flex;
	flex: none;
	height: 24px;
	margin-top: 2px;
	border-top: 1px solid #2f4553;
	background: linear-gradient(#9db5c4, #7d95a4);
}
.tabs button {
	height: 20px;
	padding: 0 3px;
	white-space: nowrap;
}
.tabs button:first-child {
	padding-left: 9px;
}
.tabs .on {
	background: #8fa7b6;
	border: 1px solid #2f4553;
	border-top: 0;
	padding: 0 2px;
}
.status {
	display: flex;
	flex: none;
	height: 19px;
	margin-top: 1px;
	gap: 2px;
}
.st {
	display: flex;
	align-items: center;
	justify-content: center;
	gap: 4px;
	min-width: 22px;
	border: 1px solid #566f7e;
	background: linear-gradient(#a5bdcc, #7a92a1);
}
.st-text {
	width: 301px;
}
.st-sw {
	width: 39px;
	margin-right: -2px;
	background: #8fa7b6;
}
.st-num {
	width: 103px;
	margin-left: 2px;
}
.st-num + .st-num {
	margin-left: 0;
}
.st-fill {
	flex: 1;
}
.wheel {
	width: 14px;
	height: 14px;
	border-radius: 50%;
	background: conic-gradient(#ff3, #f80, #f22, #e2e, #33f, #2cf, #2e2, #ff3);
}
.sw {
	width: 14px;
	height: 11px;
	background: #000;
	border: 1px solid #33414b;
}
.sw.grey {
	background: #8299a9;
	border-color: #5f7786;
}
.sw.white {
	background: #fff;
	border-color: #fff;
}
.sw.pale {
	background: #bfd8e7;
	border-color: #d9edf8;
}

/* dialog frame */
.frame {
	display: flex;
	gap: 2px;
	margin: 7px 8px 0 7px;
	padding: 7px;
	border: 1px solid #4d6676;
	border-radius: 5px;
}
.side {
	display: flex;
	flex-direction: column;
	gap: 15px;
	flex: none;
	width: 134px;
	padding: 12px;
	background: #7d97aa;
}
.side-wide {
	width: 138px;
}
.side-group {
	display: flex;
	flex-direction: column;
	align-items: center;
	padding-bottom: 7px;
	background: #9bafbd;
	border-radius: 3px 3px 0 0;
}
.side-wide .side-group {
	padding-bottom: 28px;
	flex: 1;
}
.side-group:nth-child(2) {
	flex: 1;
}
.side-group h3 {
	align-self: stretch;
	height: 25px;
	margin-bottom: 9px;
	padding-right: 16px;
	border-radius: 3px 3px 0 0;
	background: linear-gradient(90deg, #fff, #e3eaee 30%, #8fa6b5 92%);
	line-height: 26px;
	text-align: center;
	font-weight: normal;
}
.side-group h3.bold {
	font-weight: bold;
}
.side-item {
	display: flex;
	flex-direction: column;
	align-items: center;
	height: 71px;
	white-space: nowrap;
	line-height: 19px;
}
.pic {
	padding: 2px;
}
.active .pic {
	background: #8da3b2;
}
.pane {
	flex: 1;
	min-width: 0;
	display: flex;
	flex-direction: column;
	margin: 2px 1px 2px 0;
	border: 1px solid #4d6676;
}
.pane-dark {
	height: 17px;
	margin: 1px;
	padding-left: 4px;
	background: #4f6877;
	line-height: 17px;
}
h4 {
	flex: none;
	height: 19px;
	padding-left: 4px;
	border-bottom: 1px solid #4d6676;
	background: #758e9e;
	line-height: 18px;
	white-space: nowrap;
	overflow: hidden;
}
.groups {
	flex: 1;
	display: flex;
	flex-direction: column;
	gap: 4px;
	padding: 8px 7px 8px;
}
.tight {
	gap: 3px;
	padding-bottom: 10px;
}
.group {
	border: 1px solid #4d6676;
}

/* controls */
.combo {
	display: flex;
	flex: 1;
	min-width: 0;
	height: 20px;
	border: 1px solid #4d6676;
	background: #bfd8e7;
}
.combo select, .combo input {
	flex: 1;
	min-width: 0;
	padding: 0;
	appearance: none;
	outline: 0;
}
.arrow {
	display: grid;
	place-items: center;
	width: 15px;
	border-left: 1px solid #4d6676;
	background: linear-gradient(#b4ccda, #637d8c);
}
.arrow::before {
	content: '';
	border: 4px solid transparent;
	border-top-color: #000;
	border-bottom: 0;
}
.combo button {
	display: grid;
	place-items: center;
	width: 20px;
	border: 1px solid;
	border-color: #c4dae6 #4d6676 #4d6676 #c4dae6;
	background: linear-gradient(#b4ccda, #7b94a3);
}
.check, .radio {
	display: flex;
	align-items: center;
	gap: 3px;
	white-space: pre;
}
.radio {
	gap: 2px;
}
.check input, .radio input {
	flex: none;
	display: grid;
	place-items: center;
	width: 13px;
	height: 13px;
	appearance: none;
	border: 1px solid #4d6676;
	background: #fff;
}
.check input {
	margin-bottom: 2px;
}
.radio input {
	border-radius: 50%;
}
.check input:checked::before {
	content: '';
	width: 4px;
	height: 7px;
	margin-top: -2px;
	border: solid #1f3440;
	border-width: 0 2px 2px 0;
	transform: rotate(42deg);
}
.check input:disabled {
	background: #c9c4be;
}
.check input:disabled::before {
	border-color: #857f7a;
}
.radio input:checked::before {
	content: '';
	width: 5px;
	height: 5px;
	border-radius: 50%;
	background: #1f2f3a;
}
.row-default {
	display: flex;
	align-items: center;
	height: 31px;
	padding-left: 7px;
}
.auto {
	align-self: stretch;
	width: 130px;
	margin-left: 7px;
	padding: 3px 0 0 8px;
	border-left: 1px solid #4d6676;
}
.device-list {
	height: 352px;
	margin: 6px 5px 0;
	background: #fff;
	overflow: hidden;
}
table {
	width: 100%;
	table-layout: fixed;
	border-collapse: collapse;
}
th, td {
	padding: 0 1px;
	border: 1px solid #4d6676;
	white-space: nowrap;
	overflow: hidden;
	font-weight: normal;
}
th {
	height: 18px;
	background: #758e9e;
	border-color: #8fa7b6 #8fa7b6 #4d6676;
}
th:first-child {
	width: 186px;
}
th:nth-child(2) {
	width: 104px;
}
td {
	height: 21px;
	background: #758e9e;
}
td:nth-child(2) {
	color: #6b7f8c;
	text-align: center;
}
.on td {
	background: #fff;
}
.on td:nth-child(2) {
	color: #808080;
}
.current td:first-child {
	background: #0a246a;
	color: #fff;
}
.auto-add {
	margin: 1px 5px 7px 7px;
	padding: 7px;
	border: 1px solid #4d6676;
	border-radius: 2px;
}
.type-row {
	display: flex;
	align-items: center;
	height: 31px;
	padding: 0 6px 0 10px;
}
.type-row label {
	width: 38px;
}
.formats {
	display: flex;
	gap: 9px;
	padding: 4px 6px 4px 12px;
}
.format-rows {
	flex: 1;
	min-width: 0;
	display: grid;
	grid-template-columns: 50px 1fr;
	align-items: center;
	gap: 3px 0;
}
.types {
	display: flex;
	flex-direction: column;
	align-items: center;
	justify-content: center;
	gap: 4px;
	width: 75px;
	border: 1px solid #36505f;
	background: linear-gradient(135deg, #9cb4c2, #7b94a3 55%, #5f7887);
	white-space: nowrap;
}
.line {
	display: flex;
	align-items: center;
	height: 28px;
	padding-left: 12px;
	border-top: 1px solid #4d6676;
	white-space: nowrap;
}
.w-res {
	width: 185px;
}
.w-lab {
	width: 51px;
}
.w-lab.second {
	width: 49px;
	margin-left: 11px;
}
.w-pix {
	width: 264px;
}
.w-mpo {
	width: 163px;
}
.w-no {
	width: 44px;
}
.w-hor {
	width: 135px;
}
.rotate {
	margin-left: 10px;
}
.spin {
	display: flex;
	width: 48px;
	height: 20px;
	border: 1px solid #4d6676;
	background: #bfd8e7;
}
.spin.long {
	width: 77px;
}
.spin input {
	flex: 1;
	width: 0;
	padding-left: 2px;
}
.spin b {
	display: flex;
	flex-direction: column;
	justify-content: space-between;
	align-items: center;
	width: 15px;
	padding: 3px 0;
	background: linear-gradient(#b4ccda, #637d8c 48%, #4d6676 50%, #b4ccda 54%, #637d8c);
}
.spin b::before, .spin b::after {
	content: '';
	border: 3px solid transparent;
	border-top: 0;
	border-bottom-color: #000;
}
.spin b::after {
	border-top: 3px solid #000;
	border-bottom: 0;
}
.options {
	padding: 3px 0 4px 10px;
}
.options > .check {
	height: 20px;
}
.names {
	display: flex;
	height: 22px;
}
.encodings {
	display: grid;
	grid-template-columns: 69px 87px 1fr;
	flex: 1;
	margin: 2px 12px 0 auto;
	max-width: 282px;
	padding-left: 7px;
	border: 1px solid #4d6676;
}
.line.script {
	padding-right: 6px;
}
.w-script {
	width: 250px;
}
.actions {
	display: flex;
	gap: 11px;
	padding: 8px 10px 8px 11px;
}
.actions button {
	width: 75px;
	height: 26px;
	border: 1px solid;
	border-color: #c4dae6 #4d6676 #4d6676 #c4dae6;
	background: linear-gradient(#b4ccda, #a2bac8 30%, #637d8c);
}
.actions .ok {
	margin-left: auto;
	border: 1px solid #000;
	box-shadow: inset 1px 1px #c4dae6;
}
</style>
